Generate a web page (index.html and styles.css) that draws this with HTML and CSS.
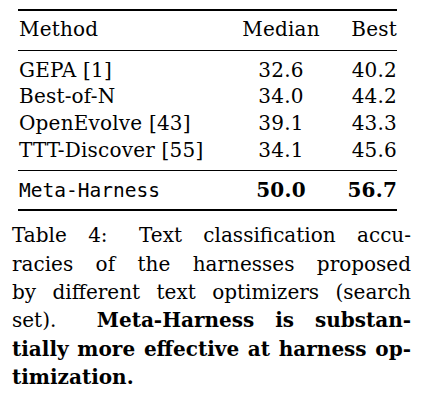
FILE: index.html
```html
<!DOCTYPE html>
<html lang="en">
<head>
    <meta charset="UTF-8">
    <meta name="viewport" content="width=device-width, initial-scale=1.0">
    <title>Table 4</title>
    <link rel="stylesheet" href="styles.css">
</head>
<body>

<div class="figure">
    <table class="results">
        <colgroup>
            <col class="col-method">
            <col class="col-median">
            <col class="col-best">
        </colgroup>
        <thead>
            <tr>
                <th class="method">Method</th>
                <th class="median">Median</th>
                <th class="best">Best</th>
            </tr>
        </thead>
        <tbody class="baselines">
            <tr class="first">
                <td class="method">GEPA [1]</td>
                <td class="median">32.6</td>
                <td class="best">40.2</td>
            </tr>
            <tr>
                <td class="method">Best-of-N</td>
                <td class="median">34.0</td>
                <td class="best">44.2</td>
            </tr>
            <tr>
                <td class="method">OpenEvolve [43]</td>
                <td class="median">39.1</td>
                <td class="best">43.3</td>
            </tr>
            <tr class="last">
                <td class="method">TTT-Discover [55]</td>
                <td class="median">34.1</td>
                <td class="best">45.6</td>
            </tr>
        </tbody>
        <tbody class="ours">
            <tr>
                <td class="method"><code>Meta-Harness</code></td>
                <td class="median"><b>50.0</b></td>
                <td class="best"><b>56.7</b></td>
            </tr>
        </tbody>
    </table>

    <p class="caption">
        <span class="line"><span class="label">Table 4:</span> Text classification accu-</span>
        <span class="line">racies of the harnesses proposed</span>
        <span class="line">by different text optimizers (search</span>
        <span class="line">set). &nbsp;<b>Meta-Harness is substan-</b></span>
        <span class="line"><b>tially more effective at harness op-</b></span>
        <span class="line last"><b>timization.</b></span>
    </p>
</div>

</body>
</html>
```

FILE: styles.css
```css
body {
    margin: 0;
    background-color: #fff;
    color: #000;
    font-family: "DejaVu Serif", "Liberation Serif", serif;
}

.figure {
    width: 428px;
    padding-top: 9px;
}

/* table */
.results {
    margin-left: 18px;
    width: 379px;
    table-layout: fixed;
    border-collapse: collapse;
    border-top: 2px solid #000;
    border-bottom: 2px solid #000;
    font-family: "DejaVu Serif", "Liberation Serif", serif;
    font-size: 20px;
    line-height: 26.7px;
    letter-spacing: 0.2px;
}

.col-method {
    width: 212px;
}
.col-median {
    width: 102px;
}
.col-best {
    width: 65px;
}

.results th,
.results td {
    padding: 0;
    font-weight: normal;
    white-space: nowrap;
    vertical-align: baseline;
}

.results thead th {
    padding-top: 5px;
    padding-bottom: 7px;
    border-bottom: 1px solid #000;
}

.method {
    text-align: left;
    padding-left: 1px !important;
}
.median {
    text-align: center;
}
.best {
    text-align: right;
}

.baselines .first td {
    padding-top: 6px;
}
.baselines .last td {
    padding-bottom: 6px;
}

.ours td {
    border-top: 1px solid #000;
    padding-top: 6px;
    padding-bottom: 5px;
}

.ours code {
    font-family: "DejaVu Sans Mono", "Liberation Mono", monospace;
    font-size: 19.5px;
    letter-spacing: 0;
}

.ours b {
    font-weight: bold;
}

/* caption */
.caption {
    margin: 10px 0 0 12px;
    width: 399px;
    font-family: "DejaVu Serif", "Liberation Serif", serif;
    font-size: 20px;
    line-height: 28.4px;
}

.caption .line {
    display: block;
    text-align: justify;
    text-align-last: justify;
}
.caption .line.last {
    text-align-last: left;
}

.caption .label {
    margin-right: 10px;
}
```
